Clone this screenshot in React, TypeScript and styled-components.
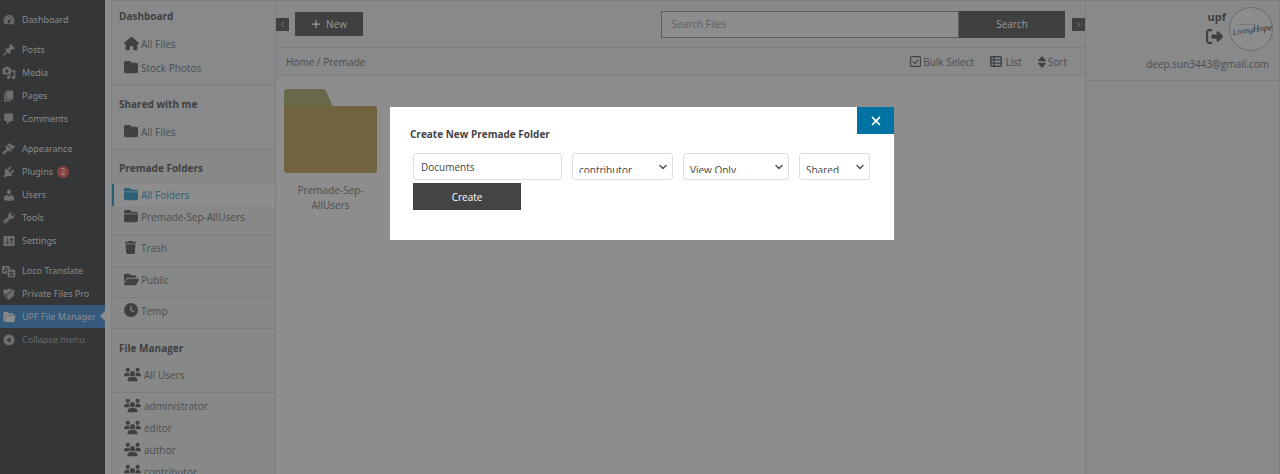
import React from 'react';
import styled, { createGlobalStyle } from 'styled-components';
import {
  FaHouse, FaFolder, FaFolderClosed, FaTrash, FaFolderOpen, FaClock, FaUsers, FaPlus, FaXmark, FaRightFromBracket,
} from 'react-icons/fa6';
import { FiChevronDown, FiChevronLeft, FiChevronRight } from 'react-icons/fi';

const c = {
  page: '#8d8d8d',
  panel: '#87898b',
  side: '#868988',
  line: '#7c7e80',
  text: '#4c4d4d',
  ink: '#404040',
  blue: '#2c6077',
};

const Global = createGlobalStyle`
  * { box-sizing: border-box; }
  body { margin: 0; background: ${c.page}; font-family: "Open Sans", sans-serif; font-size: 10px; line-height: 16px; color: ${c.text}; }
  button, input, select { font: inherit; margin: 0; }
  a { color: inherit; text-decoration: none; }
  svg { flex: none; display: block; }
  h2, h3, p, ul { margin: 0; padding: 0; font-size: inherit; }
  ul { list-style: none; }
`;

const Shell = styled.div`
  display: flex;
  height: 100vh;
  overflow: hidden;
`;

/* ---------- admin menu ---------- */
const AdminMenu = styled.nav`
  flex: none;
  width: 105px;
  padding-top: 8px;
  background: #343637;
  font-family: "Noto Sans", sans-serif;
  font-size: 9px;
`;
const MenuItem = styled.li<{ $gap?: boolean }>`
  margin-top: ${p => (p.$gap ? 7 : 0)}px;
`;
const MenuLink = styled.a<{ $active?: boolean; $dim?: boolean }>`
  position: relative;
  display: flex;
  align-items: center;
  gap: 6px;
  height: 23px;
  padding-left: 2px;
  white-space: nowrap;
  color: ${p => (p.$dim ? '#686b6c' : '#8b8c8c')};
  background: ${p => (p.$active ? '#34597a' : 'transparent')};
  > svg { width: 14px; height: 14px; fill: ${p => (p.$active ? '#8b8c8c' : '#6c6f71')}; }
  ${p => p.$active && `&::after {
    content: ''; position: absolute; right: 0; top: 6px;
    border: 5px solid transparent; border-left: 0; border-right-color: ${c.page};
  }`}
`;
const Count = styled.span`
  width: 12px;
  height: 12px;
  margin-left: -2px;
  border-radius: 6px;
  background: #8a4040;
  color: #a09a9a;
  font-size: 8px;
  line-height: 12px;
  text-align: center;
`;

type MenuEntry = { label: string; d: string; gap?: boolean; active?: boolean; dim?: boolean; count?: number };
const menu: MenuEntry[] = [
  { label: 'Dashboard', d: 'M3.76 16h12.48c1.1-1.37 1.76-3.11 1.76-5 0-4.42-3.58-8-8-8s-8 3.58-8 8c0 1.89.66 3.63 1.76 5zM10 4c.55 0 1 .45 1 1s-.45 1-1 1-1-.45-1-1 .45-1 1-1zM6 6c.55 0 1 .45 1 1s-.45 1-1 1-1-.45-1-1 .45-1 1-1zm8 0c.55 0 1 .45 1 1s-.45 1-1 1-1-.45-1-1 .45-1 1-1zm-5.37 5.55L12 7v6c0 1.1-.9 2-2 2s-2-.9-2-2c0-.57.24-1.08.63-1.45zM4 10c.55 0 1 .45 1 1s-.45 1-1 1-1-.45-1-1 .45-1 1-1zm12 0c.55 0 1 .45 1 1s-.45 1-1 1-1-.45-1-1 .45-1 1-1z' },
  { label: 'Posts', gap: true, d: 'M10.44 3.02l1.82-1.82 6.36 6.35-1.83 1.82c-1.05-.68-2.48-.57-3.41.36l-.75.75c-.92.93-1.04 2.35-.35 3.41l-1.83 1.82-2.41-2.41-2.8 2.79c-.42.42-3.38 2.71-3.8 2.29s1.86-3.39 2.28-3.81l2.79-2.79L4.1 9.36l1.83-1.82c1.05.69 2.48.57 3.4-.36l.75-.75c.93-.92 1.05-2.35.36-3.41z' },
  { label: 'Media', d: 'M13 11V4c0-.55-.45-1-1-1h-1.67L9 1H5L3.67 3H2c-.55 0-1 .45-1 1v7c0 .55.45 1 1 1h10c.55 0 1-.45 1-1zM7 4.5c1.38 0 2.5 1.12 2.5 2.5S8.38 9.5 7 9.5 4.5 8.38 4.5 7 5.62 4.5 7 4.5zM14 6h5v10.5c0 1.38-1.12 2.5-2.5 2.5S14 17.88 14 16.5s1.12-2.5 2.5-2.5c.17 0 .34.02.5.05V9h-3V6zm-4 8.05V13h2v3.5c0 1.38-1.12 2.5-2.5 2.5S7 17.88 7 16.5 8.12 14 9.5 14c.17 0 .34.02.5.05z' },
  { label: 'Pages', d: 'M6 15V2h10v13H6zm-1 1h8v2H3V5h2v11z' },
  { label: 'Comments', d: 'M5 2h9c1.1 0 2 .9 2 2v7c0 1.1-.9 2-2 2h-2l-5 5v-5H5c-1.1 0-2-.9-2-2V4c0-1.1.9-2 2-2z' },
  { label: 'Appearance', gap: true, d: 'M14.48 11.06L7.41 3.99l1.5-1.5c.5-.56 2.3-.47 3.51.32 1.21.8 1.43 1.28 2.91 2.1 1.18.64 2.45 1.26 4.45.85zm-.71.71L6.7 4.7 4.93 6.47c-.39.39-.39 1.02 0 1.41l1.06 1.06c.39.39.39 1.03 0 1.42-.6.6-1.43 1.11-2.21 1.69-.35.26-.7.53-1.01.84C1.43 14.23.4 16.08 1.4 17.07c.99 1 2.84-.03 4.18-1.36.31-.31.58-.66.85-1.02.57-.78 1.08-1.61 1.69-2.21.39-.39 1.02-.39 1.41 0l1.06 1.06c.39.39 1.02.39 1.41 0z' },
  { label: 'Plugins', count: 2, d: 'M13.11 4.36L9.87 7.6 8 5.73l3.24-3.24c.35-.34 1.05-.2 1.56.32.52.51.66 1.21.31 1.55zm-8 1.77l.91-1.12 9.01 9.01-1.19.84c-.71.71-2.63 1.16-3.82 1.16H6.14L4.9 17.26c-.59.59-1.54.59-2.12 0-.59-.58-.59-1.53 0-2.12l1.24-1.24v-3.88c0-1.13.4-3.19 1.09-3.89zm7.26 3.97l3.24-3.24c.34-.35 1.04-.21 1.55.31.52.51.66 1.21.31 1.55l-3.24 3.25z' },
  { label: 'Users', d: 'M10 9.25c-2.27 0-2.73-3.44-2.73-3.44C7 4.02 7.82 2 9.97 2c2.16 0 2.98 2.02 2.71 3.81 0 0-.41 3.44-2.68 3.44zm0 2.57L12.72 10c2.39 0 4.52 2.33 4.52 4.53v2.49s-3.65 1.13-7.24 1.13c-3.65 0-7.24-1.13-7.24-1.13v-2.49c0-2.25 1.94-4.48 4.47-4.48z' },
  { label: 'Tools', d: 'M16.68 9.77c-1.34 1.34-3.3 1.67-4.95.99l-5.41 6.52c-.99.99-2.59.99-3.58 0s-.99-2.59 0-3.57l6.52-5.42c-.68-1.65-.35-3.61.99-4.95 1.28-1.28 3.12-1.62 4.72-1.06l-2.89 2.89 2.82 2.82 2.86-2.87c.53 1.58.18 3.39-1.08 4.65zM3.81 16.21c.4.39 1.04.39 1.43 0 .4-.4.4-1.04 0-1.43-.39-.4-1.03-.4-1.43 0-.39.39-.39 1.03 0 1.43z' },
  { label: 'Settings', d: 'M18 16V4c0-.55-.45-1-1-1H3c-.55 0-1 .45-1 1v12c0 .55.45 1 1 1h14c.55 0 1-.45 1-1zM8 11h1c.55 0 1 .45 1 1s-.45 1-1 1H8v1.5c0 .28-.22.5-.5.5s-.5-.22-.5-.5V13H6c-.55 0-1-.45-1-1s.45-1 1-1h1V5.5c0-.28.22-.5.5-.5s.5.22.5.5V11zm5-2h-1c-.55 0-1-.45-1-1s.45-1 1-1h1V5.5c0-.28.22-.5.5-.5s.5.22.5.5V7h1c.55 0 1 .45 1 1s-.45 1-1 1h-1v5.5c0 .28-.22.5-.5.5s-.5-.22-.5-.5V9z' },
  { label: 'Loco Translate', gap: true, d: 'M11 7H9.49c-.63 0-1.25.3-1.59.7L7 5H4.13l-2.39 7h1.69l.74-2H7v4H2c-1.1 0-2-.9-2-2V5c0-1.1.9-2 2-2h7c1.1 0 2 .9 2 2v2zM6.51 9H4.49l1-2.93zM10 8h7c1.1 0 2 .9 2 2v7c0 1.1-.9 2-2 2h-7c-1.1 0-2-.9-2-2v-7c0-1.1.9-2 2-2zm7.25 5v-1.08h-3.17V9.75h-1.16v2.17H9.75V13h1.28c.11.85.56 1.85 1.28 2.62-.87.36-1.89.62-2.31.62-.01.02.22.97.2 1.46.84 0 2.21-.5 3.28-1.15 1.09.65 2.48 1.15 3.34 1.15-.02-.49.2-1.44.2-1.46-.43 0-1.49-.27-2.38-.63.7-.77 1.14-1.77 1.25-2.61h1.36zm-3.81 1.93c-.5-.46-.85-1.13-1.01-1.93h2.09c-.17.8-.51 1.47-1 1.93l-.04.03s-.03-.02-.04-.03z' },
  { label: 'Private Files Pro', d: 'M2 4c3 0 5-.6 8-2 2 1 3.600 1.500 5.500 1.800L3.200 12.600C2.200 10 2 7 2 4zM16.800 4H18c0 3.500-.5 7-2 9.500l-2.500 2.500 1.500-3-5 5.500c-1.500-.6-3-1.700-4-2.800l4-4.200-5 3-.8-1z' },
  { label: 'UPF File Manager', active: true, d: 'M2 16V4c0-.6.4-1 1-1h5l2 2h6c.6 0 1 .4 1 1v1H5.500L3.500 16zM4 17L6 8h13.500l-2 9z' },
  { label: 'Collapse menu', dim: true, d: 'M10 2.160c4.330 0 7.840 3.510 7.840 7.840s-3.510 7.840-7.840 7.840S2.160 14.330 2.160 10 5.710 2.160 10 2.160zm2 11.720V6.120L6.180 9.970z' },
];

/* ---------- folder sidebar ---------- */
const Tree = styled.aside`
  flex: none;
  width: 165px;
  margin-left: 6px;
  border: 1px solid ${c.line};
  border-bottom: 0;
  background: ${c.side};
`;
const Group = styled.section<{ $top: number; $bottom: number; $cool?: boolean; $last?: boolean }>`
  padding: ${p => p.$top}px 0 ${p => p.$bottom}px;
  background: ${p => (p.$cool ? c.panel : c.side)};
  border-bottom: ${p => (p.$last ? 0 : 1)}px solid ${c.line};
`;
const GroupTitle = styled.h2`
  margin: 0 0 5px;
  padding-left: 7px;
  line-height: 22px;
  color: ${c.ink};
`;
const TreeLink = styled.a<{ $tall?: boolean; $active?: boolean; $wide?: boolean }>`
  display: flex;
  align-items: center;
  gap: ${p => (p.$wide ? 3 : 2)}px;
  height: ${p => (p.$tall ? 24 : 22)}px;
  padding-left: ${p => (p.$active ? 10 : 12)}px;
  border-left: ${p => (p.$active ? 2 : 0)}px solid ${c.blue};
  background: ${p => (p.$active ? c.page : 'transparent')};
  color: ${p => (p.$active ? c.blue : c.text)};
  white-space: nowrap;
`;
const TreeIcon = styled.span<{ $wide?: boolean; $active?: boolean }>`
  width: ${p => (p.$wide ? 17 : 15)}px;
  margin-bottom: 2px;
  color: ${p => (p.$active ? c.blue : c.ink)};
`;

type Entry = { label: string; icon: React.ReactNode; active?: boolean; wide?: boolean };
type GroupData = { title?: string; top: number; bottom: number; cool?: boolean; tall?: boolean; items: Entry[] };
const folder = <FaFolder size={14} />;
const closedFolder = <FaFolderClosed size={14} />;
const users = <FaUsers size={17} />;
const groups: GroupData[] = [
  { title: 'Dashboard', top: 4, bottom: 5, cool: true, tall: true, items: [{ label: 'All Files', icon: <FaHouse size={15} /> }, { label: 'Stock Photos', icon: folder }] },
  { title: 'Shared with me', top: 7, bottom: 5, cool: true, tall: true, items: [{ label: 'All Files', icon: folder }] },
  { title: 'Premade Folders', top: 7, bottom: 6, items: [{ label: 'All Folders', icon: closedFolder, active: true }, { label: 'Premade-Sep-AllUsers', icon: closedFolder }] },
  { top: 2, bottom: 7, items: [{ label: 'Trash', icon: <FaTrash size={13} /> }] },
  { top: 2, bottom: 6, items: [{ label: 'Public', icon: <FaFolderOpen size={15} /> }] },
  { top: 2, bottom: 6, items: [{ label: 'Temp', icon: <FaClock size={14} /> }] },
  { title: 'File Manager', top: 8, bottom: 6, items: [{ label: 'All Users', icon: users, wide: true }] },
  { top: 2, bottom: 0, items: ['administrator', 'editor', 'author', 'contributor'].map(label => ({ label, icon: users, wide: true })) },
];

/* ---------- main area ---------- */
const Main = styled.main`
  flex: 1;
  min-width: 0;
  border-top: 1px solid ${c.line};
`;
const TopBar = styled.header`
  display: flex;
  align-items: center;
  height: 47px;
  border-bottom: 1px solid ${c.line};
  background: ${c.panel};
`;
const PanelToggle = styled.button`
  display: grid;
  place-items: center;
  flex: none;
  width: 13px;
  height: 13px;
  padding: 0;
  border: 0;
  background: ${c.ink};
  color: ${c.page};
`;
const NewButton = styled.button`
  display: flex;
  align-items: center;
  justify-content: center;
  gap: 5px;
  width: 68px;
  height: 24px;
  margin: 0 auto 0 6px;
  padding: 0;
  border: 0;
  background: ${c.ink};
  color: #9b9b9b;
`;
const Search = styled.form`
  display: flex;
  width: 50%;
  height: 27px;
  margin-right: 7px;
`;
const SearchInput = styled.input`
  flex: 1;
  min-width: 0;
  padding: 0 10px;
  border: 1px solid #5c5c5c;
  border-radius: 0;
  background: ${c.page};
  color: ${c.text};
  &::placeholder { color: #5c5d5d; opacity: 1; }
`;
const SearchButton = styled.button`
  width: 106px;
  padding: 0;
  border: 0;
  background: ${c.ink};
  color: #9b9b9b;
`;
const Crumbs = styled.div`
  display: flex;
  align-items: center;
  height: 28px;
  padding: 0 18px 0 10px;
  border-bottom: 1px solid ${c.line};
  background: ${c.panel};
`;
const Path = styled.nav`
  margin-right: auto;
`;
const Tool = styled.button<{ $gap: number }>`
  display: flex;
  align-items: center;
  gap: ${p => p.$gap}px;
  margin-left: 16px;
  padding: 0;
  border: 0;
  background: none;
  color: ${c.text};
`;
const Grid = styled.div`
  display: flex;
  padding: 13px 8px;
`;
const FolderCard = styled.a`
  width: 93px;
  text-align: center;
  line-height: 15px;
`;
const FolderName = styled.p`
  margin-top: 10px;
  padding: 0 12px;
`;

/* ---------- account panel ---------- */
const Account = styled.aside`
  flex: none;
  width: 195px;
  border: 1px solid ${c.line};
  border-bottom: 0;
  background: ${c.panel};
`;
const Profile = styled.div`
  padding: 6px 6px 0 0;
  height: 80px;
  border-bottom: 1px solid ${c.line};
`;
const ProfileTop = styled.div`
  display: flex;
  justify-content: flex-end;
  gap: 3px;
`;
const ProfileName = styled.div`
  display: flex;
  flex-direction: column;
  align-items: flex-end;
  gap: 3px;
  padding-top: 2px;
  font-size: 11px;
  font-weight: 700;
  color: ${c.ink};
`;
const LogoutButton = styled.button`
  margin-right: 3px;
  padding: 0;
  border: 0;
  background: none;
  color: ${c.ink};
`;
const Email = styled.p`
  margin-top: 5px;
  padding-right: 4px;
  text-align: right;
`;

/* ---------- dialog ---------- */
const Backdrop = styled.div`
  position: fixed;
  inset: 0;
  display: flex;
  justify-content: center;
  align-items: flex-start;
  padding: 107px 0 0 4px;
`;
const Dialog = styled.div`
  width: 504px;
  background: #fff;
  padding-bottom: 30px;
  color: #444;
`;
const DialogHead = styled.div`
  display: flex;
  justify-content: space-between;
  padding-left: 20px;
`;
const DialogTitle = styled.h3`
  padding-top: 19px;
`;
const CloseButton = styled.button`
  display: grid;
  place-items: center;
  width: 37px;
  height: 27px;
  padding: 0;
  border: 0;
  background: #0073a3;
  color: #fff;
`;
const Fields = styled.form`
  display: flex;
  flex-wrap: wrap;
  gap: 3px 10px;
  padding: 11px 20px 0 23px;
`;
const NameInput = styled.input`
  width: 149px;
  height: 27px;
  padding: 0 7px;
  border: 1px solid #ddd;
  border-radius: 3px;
  color: #444;
`;
const SelectBox = styled.div<{ $w: number }>`
  position: relative;
  width: ${p => p.$w}px;
  height: 27px;
  > svg { position: absolute; right: 4px; top: 8px; pointer-events: none; color: #555; }
`;
const Select = styled.select`
  appearance: none;
  width: 100%;
  height: 27px;
  padding: 6px 20px 6px 6px;
  border: 1px solid #ddd;
  border-radius: 3px;
  background: #fff;
  color: #444;
  line-height: 20px;
`;
const CreateButton = styled.button`
  width: 108px;
  height: 27px;
  padding: 0;
  border: 0;
  background: #444;
  color: #fff;
`;

const BigFolder = () => (
  <svg width="93" height="84" viewBox="0 0 93 84">
    <path d="M0 20V3a3 3 0 0 1 3-3h36q2 0 3 2l8 18z" fill="#68684b" />
    <path d="M0 17h90a3 3 0 0 1 3 3v61a3 3 0 0 1-3 3H3a3 3 0 0 1-3-3z" fill="#726340" />
  </svg>
);

const Logo = () => (
  <svg width="44" height="44" viewBox="0 0 44 44" role="img" aria-label="Church of the Living Hope">
    <circle cx="22" cy="22" r="21.500" fill="#8d8d8d" stroke="#6c6d6d" />
    <text x="7" y="18" fontSize="2.500" fill="#444" fontFamily="Open Sans, sans-serif">CHURCH OF THE</text>
    <text x="4" y="28" fontSize="8" fontStyle="italic" fill="#333" fontFamily="Liberation Serif, serif" transform="rotate(-8 4 28)">Living</text>
    <text x="24" y="25" fontSize="9" fontStyle="italic" fill="#333" fontFamily="Liberation Serif, serif" transform="rotate(-6 24 25)">Hope</text>
  </svg>
);

const ListIcon = () => (
  <svg width="12" height="11" viewBox="0 0 12 11" fill="none" stroke="#404040">
    <rect x=".7" y=".7" width="10.600" height="9.600" rx="1" strokeWidth="1.400" />
    <path d="M1 3.900h10M1 7.100h10M4 1v9" strokeWidth="1.300" />
  </svg>
);

const CheckIcon = () => (
  <svg width="11" height="11" viewBox="0 0 11 11" fill="none" stroke="#404040">
    <rect x=".6" y=".6" width="9.800" height="9.800" rx="1" strokeWidth="1.100" />
    <path d="M3 5.500l2 2 3.200-3.700" strokeWidth="1.100" />
  </svg>
);

const SortIcon = () => (
  <svg width="8" height="12" viewBox="0 0 8 12" fill="#404040">
    <path d="M4 0l3.600 4q.5 1.200-.6 1.300H1Q-.1 5.200.4 4zM4 12L.4 8Q-.1 6.800 1 6.700h6q1.100.1.6 1.300z" />
  </svg>
);

const LabeledSelect = ({ label, value, width }: { label: string; value: string; width: number }) => (
  <SelectBox $w={width}>
    <Select aria-label={label} defaultValue={value}><option>{value}</option></Select>
    <FiChevronDown size={12} strokeWidth={3} />
  </SelectBox>
);

export default function App() {
  return (
    <>
      <Global />
      <Shell>
        <AdminMenu>
          <ul>
            {menu.map(m => (
              <MenuItem key={m.label} $gap={m.gap}>
                <MenuLink href="#" $active={m.active} $dim={m.dim}>
                  <svg viewBox="0 0 20 20"><path fillRule="evenodd" d={m.d} /></svg>
                  {m.label}
                  {m.count && <Count>{m.count}</Count>}
                </MenuLink>
              </MenuItem>
            ))}
          </ul>
        </AdminMenu>

        <Tree>
          {groups.map((g, i) => (
            <Group key={i} $top={g.top} $bottom={g.bottom} $cool={g.cool} $last={i === groups.length - 1}>
              {g.title && <GroupTitle>{g.title}</GroupTitle>}
              {g.items.map(it => (
                <TreeLink key={it.label} href="#" $tall={g.tall} $active={it.active} $wide={it.wide}>
                  <TreeIcon $wide={it.wide} $active={it.active}>{it.icon}</TreeIcon>
                  {it.label}
                </TreeLink>
              ))}
            </Group>
          ))}
        </Tree>

        <Main>
          <TopBar>
            <PanelToggle aria-label="Hide folders"><FiChevronLeft size={9} /></PanelToggle>
            <NewButton><FaPlus size={10} />New</NewButton>
            <Search>
              <SearchInput aria-label="Search files" placeholder="Search Files" />
              <SearchButton type="button">Search</SearchButton>
            </Search>
            <PanelToggle aria-label="Hide account"><FiChevronRight size={9} /></PanelToggle>
          </TopBar>
          <Crumbs>
            <Path><a href="#">Home</a> / <a href="#">Premade</a></Path>
            <Tool $gap={2}><CheckIcon />Bulk Select</Tool>
            <Tool $gap={4}><ListIcon />List</Tool>
            <Tool $gap={2}><SortIcon />Sort</Tool>
          </Crumbs>
          <Grid>
            <FolderCard href="#">
              <BigFolder />
              <FolderName>Premade-Sep-AllUsers</FolderName>
            </FolderCard>
          </Grid>
        </Main>

        <Account>
          <Profile>
            <ProfileTop>
              <ProfileName>
                upf
                <LogoutButton aria-label="Log out"><FaRightFromBracket size={17} /></LogoutButton>
              </ProfileName>
              <Logo />
            </ProfileTop>
            <Email>deep.sun3443@gmail.com</Email>
          </Profile>
        </Account>
      </Shell>

      <Backdrop>
        <Dialog role="dialog" aria-label="Create New Premade Folder">
          <DialogHead>
            <DialogTitle>Create New Premade Folder</DialogTitle>
            <CloseButton aria-label="Close"><FaXmark size={14} /></CloseButton>
          </DialogHead>
          <Fields>
            <NameInput aria-label="Folder name" defaultValue="Documents" />
            <LabeledSelect label="Role" value="contributor" width={101} />
            <LabeledSelect label="Permission" value="View Only" width={106} />
            <LabeledSelect label="Visibility" value="Shared" width={71} />
            <CreateButton type="button">Create</CreateButton>
          </Fields>
        </Dialog>
      </Backdrop>
    </>
  );
}
